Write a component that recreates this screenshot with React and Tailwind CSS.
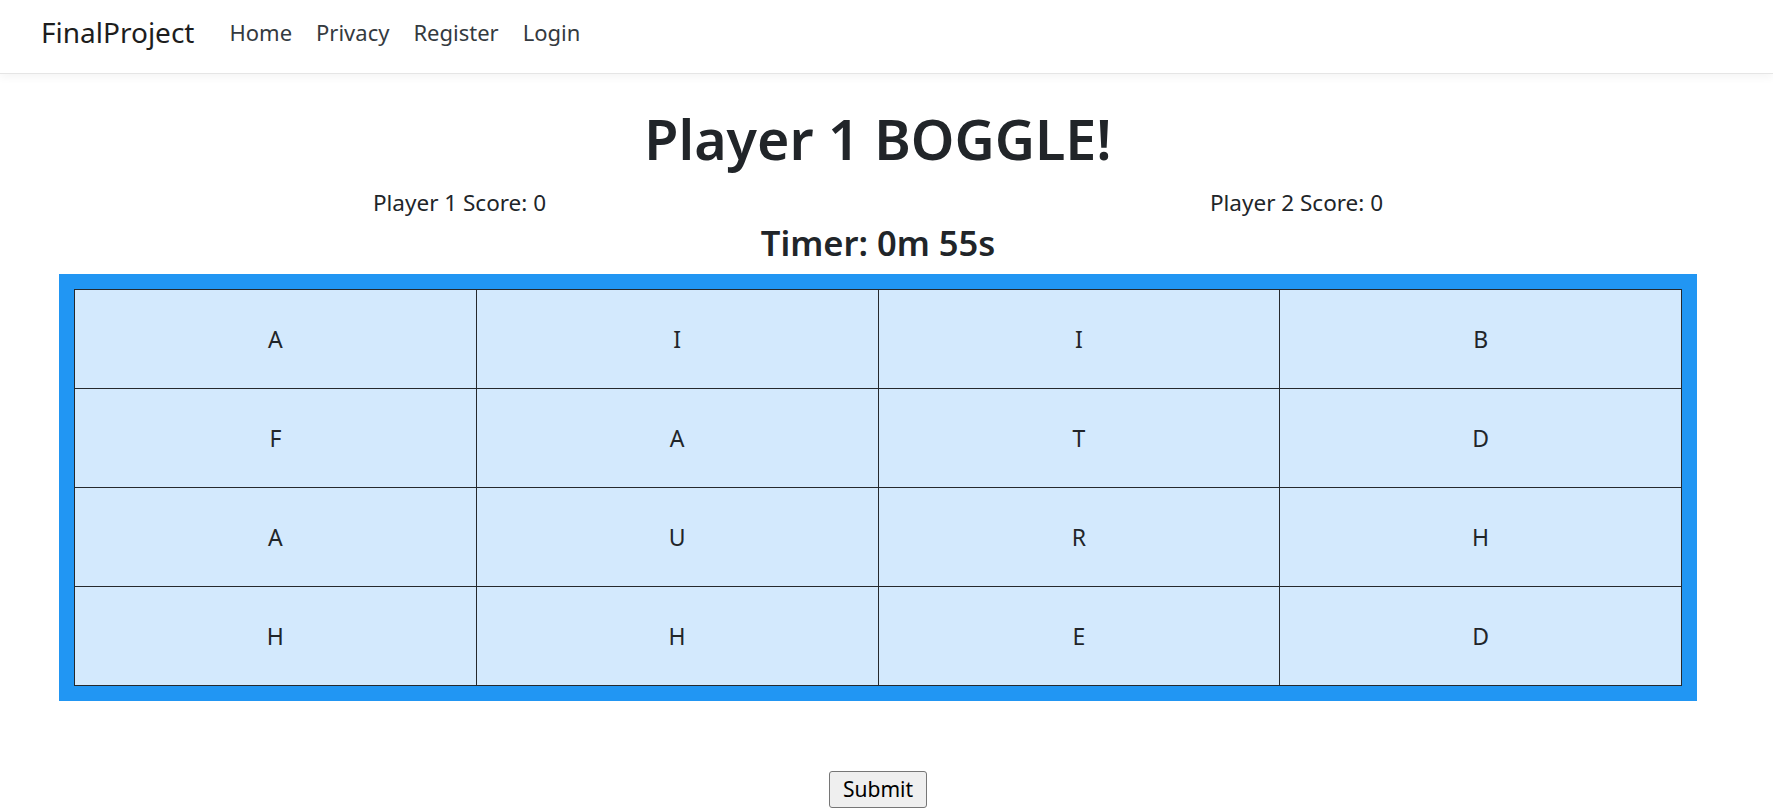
import React from 'react';

const board = [
  ['A', 'I', 'I', 'B'],
  ['F', 'A', 'T', 'D'],
  ['A', 'U', 'R', 'H'],
  ['H', 'H', 'E', 'D'],
];

const links = ['Home', 'Privacy', 'Register', 'Login'];

const App = () => {
  return (
    <div className="min-h-screen bg-white text-[#212529]" style={{ fontFamily: '"Segoe UI", "Noto Sans", "Open Sans", sans-serif' }}>
      <nav className="h-[74px] flex items-center border-b border-[#e5e5e5] shadow-[0_4px_8px_rgba(0,0,0,0.04)] pl-[41px] pb-[9px]">
        <span className="text-[28px] text-[#1d1d1d] mr-[35px]">FinalProject</span>
        <ul className="flex items-center gap-[24px]">
          {links.map(l => (
            <li key={l} className="text-[22px] text-[#343a40]">{l}</li>
          ))}
        </ul>
      </nav>

      <main className="w-[1756px] flex flex-col items-center">
        <h1 className="mt-[32px] h-[66px] leading-[66px] text-[55.5px] font-semibold">Player 1 BOGGLE!</h1>
        <div className="mt-[14px] w-[1674px] grid grid-cols-2 text-center text-[22.5px] leading-[34px]">
          <p>Player 1 Score: 0</p>
          <p>Player 2 Score: 0</p>
        </div>
        <h3 className="mt-[2px] h-[42px] leading-[42px] text-[34.5px] font-semibold">Timer: 0m 55s</h3>

        <div className="mt-[10px] w-[1638px] bg-[#2196f3] p-[15px]">
          <table className="w-full border-collapse table-fixed">
            <tbody>
              {board.map((row, r) => (
                <tr key={r}>
                  {row.map((ch, c) => (
                    <td key={c} className="h-[99px] border border-[#25292d] bg-[#d3e9fd] text-center text-[23px]">
                      {ch}
                    </td>
                  ))}
                </tr>
              ))}
            </tbody>
          </table>
        </div>

        <button className="mt-[70px] px-[13px] pt-[3px] pb-[4px] text-[21px] leading-[28px] bg-[#efefef] border border-[#767676] rounded-[3px] text-black">
          Submit
        </button>
      </main>
    </div>
  );
};

export default App;
